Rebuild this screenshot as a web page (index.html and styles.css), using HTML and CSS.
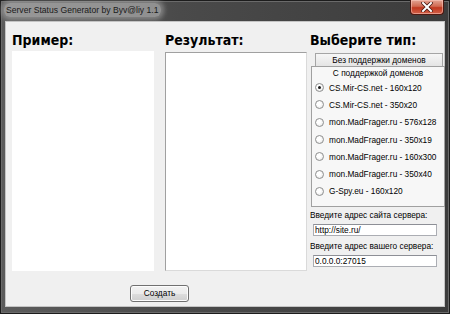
FILE: index.html
```html
<!DOCTYPE html>
<html lang="ru">
<head>
    <meta charset="UTF-8">
    <title>Server Status Generator by Byv@liy 1.1</title>
    <link rel="stylesheet" href="styles.css">
</head>
<body>
    <div class="window">
        <div class="titlebar">
            <span class="title">Server Status Generator by Byv@liy 1.1</span>
            <button class="close" type="button" aria-label="Закрыть">
                <svg width="12" height="10" viewBox="0 0 12 10">
                    <path d="M2 1 L10 9 M10 1 L2 9" stroke="#4a1a12" stroke-width="3.6" stroke-linecap="square"/>
                    <path d="M2 1 L10 9 M10 1 L2 9" stroke="#ffffff" stroke-width="2" stroke-linecap="square"/>
                </svg>
            </button>
        </div>

        <div class="client">
            <div class="columns">
                <section class="col">
                    <h2>Пример:</h2>
                    <div class="preview"></div>
                </section>

                <section class="col">
                    <h2>Результат:</h2>
                    <textarea class="result"></textarea>
                </section>

                <section class="col col-type">
                    <h2>Выберите тип:</h2>
                    <div class="tabs">
                        <div class="tab tab-back">Без поддержки доменов</div>
                        <div class="tab tab-front">С поддержкой доменов</div>
                    </div>
                    <div class="tab-panel">
                        <label class="option"><input type="radio" name="type" checked> CS.Mir-CS.net - 160x120</label>
                        <label class="option"><input type="radio" name="type"> CS.Mir-CS.net - 350x20</label>
                        <label class="option"><input type="radio" name="type"> mon.MadFrager.ru - 576x128</label>
                        <label class="option"><input type="radio" name="type"> mon.MadFrager.ru - 350x19</label>
                        <label class="option"><input type="radio" name="type"> mon.MadFrager.ru - 160x300</label>
                        <label class="option"><input type="radio" name="type"> mon.MadFrager.ru - 350x40</label>
                        <label class="option"><input type="radio" name="type"> G-Spy.eu - 160x120</label>
                    </div>

                    <label class="field-label" for="site">Введите адрес сайта сервера:</label>
                    <input class="field" id="site" type="text" value="http://site.ru/">

                    <label class="field-label" for="server">Введите адрес вашего сервера:</label>
                    <input class="field" id="server" type="text" value="0.0.0.0:27015">
                </section>
            </div>

            <div class="actions">
                <button class="btn" type="button">Создать</button>
            </div>
        </div>
    </div>
</body>
</html>
```

FILE: styles.css
```css
body {
    margin: 0;
    padding: 0;
    background: #2a2a2a;
    font-family: "Liberation Sans", Arial, sans-serif;
    color: #000;
    white-space: nowrap;
}

.window {
    width: 450px;
    height: 314px;
    display: flex;
    flex-direction: column;
    box-sizing: border-box;
    background: linear-gradient(90deg, #5c5c5c 0%, #4a4a4a 40%, #3c3c3c 100%);
    box-shadow: inset 0 0 0 1px #1c1c1c, inset 0 0 0 2px #6a6a6a;
}

.titlebar {
    height: 21px;
    display: flex;
    align-items: flex-start;
    padding-left: 4px;
}

.title {
    margin-top: 3px;
    padding: 1px 2px;
    font-size: 8.6px;
    line-height: 12px;
    color: #1a1a1a;
    background: rgba(200, 200, 200, 0.55);
    border-radius: 6px;
    box-shadow: 0 0 5px 3px rgba(200, 200, 200, 0.45);
}

.close {
    margin-left: auto;
    margin-right: 6px;
    width: 34px;
    height: 15px;
    padding: 0;
    display: flex;
    align-items: center;
    justify-content: center;
    border: 1px solid #4e1810;
    border-top: none;
    border-radius: 0 0 4px 4px;
    background: linear-gradient(#e3a493 0%, #d16a52 45%, #c0381f 55%, #d2614a 100%);
    box-shadow: inset 0 0 0 1px rgba(255, 210, 200, 0.5);
}

.client {
    flex: 1;
    margin: 0 5px 7px 5px;
    background: #f0f0f0;
    border: 1px solid #c4c4c4;
    padding: 10px 0 0 6px;
}

.columns {
    display: grid;
    grid-template-columns: 142px 142px 127px;
    column-gap: 11px;
    height: 239px;
}

.columns .col:nth-child(3) {
    margin-left: -8px;
}

h2 {
    margin: 0;
    font-family: "DejaVu Sans Condensed", "DejaVu Sans", sans-serif;
    font-stretch: condensed;
    font-weight: bold;
    font-size: 14px;
    line-height: 16px;
    color: #000;
}

.preview {
    margin-top: 3px;
    height: 220px;
    background: #fff;
}

.result {
    display: block;
    margin: 4px 0 0 0;
    width: 142px;
    height: 219px;
    box-sizing: border-box;
    padding: 0;
    resize: none;
    background: #fff;
    border: 1px solid;
    border-color: #a0a0a0 #dadada #dadada #a0a0a0;
}

.col-type {
    display: flex;
    flex-direction: column;
}

.tabs {
    margin-top: 5px;
    display: flex;
    flex-direction: column;
    font-size: 8.3px;
}

.tab {
    height: 13px;
    line-height: 13px;
    text-align: center;
    box-sizing: border-box;
}

.tab-back {
    margin: 0 2px 0 5px;
    border: 1px solid #a5a5a5;
    border-bottom: none;
    background: linear-gradient(#f6f6f6, #e4e4e4);
}

.tab-front {
    margin: 0 0 0 1px;
    border: 1px solid #a0a0a0;
    border-bottom: none;
    background: #f7f7f7;
}

.tab-panel {
    margin-left: 1px;
    padding: 0 0 6px 3px;
    background: #f7f7f7;
    border: 1px solid #a0a0a0;
    border-top: none;
    height: 128px;
    box-sizing: border-box;
}

.option {
    display: flex;
    align-items: center;
    gap: 5px;
    height: 17.3px;
    font-size: 8.3px;
}

.option input {
    appearance: none;
    margin: 0;
    width: 9px;
    height: 9px;
    border-radius: 50%;
    border: 1px solid #8e8f8f;
    background: radial-gradient(circle at 40% 40%, #ffffff 30%, #e0e0e0 100%);
    display: grid;
    place-content: center;
}

.option input:checked::before {
    content: "";
    width: 3px;
    height: 3px;
    border-radius: 50%;
    background: #1a1a1a;
}

.field-label {
    margin-top: 2px;
    font-size: 8.3px;
    line-height: 13px;
}

.field + .field-label {
    margin-top: 4px;
}

.field {
    margin: 2px 0 0 3px;
    width: 124px;
    height: 12px;
    box-sizing: border-box;
    padding: 0 1px;
    font-family: inherit;
    font-size: 8.3px;
    border: 1px solid #abadb3;
    border-top-color: #8d8f96;
    background: #fff;
    outline: none;
}

.actions {
    padding: 11px 0 0 118px;
}

.btn {
    width: 59px;
    height: 17px;
    padding: 0;
    font-family: inherit;
    font-size: 8.3px;
    color: #000;
    border: 1px solid #707070;
    border-radius: 3px;
    background: linear-gradient(#f2f2f2 0%, #ebebeb 50%, #dddddd 51%, #cfcfcf 100%);
    box-shadow: inset 0 0 0 1px #fcfcfc;
}
```
